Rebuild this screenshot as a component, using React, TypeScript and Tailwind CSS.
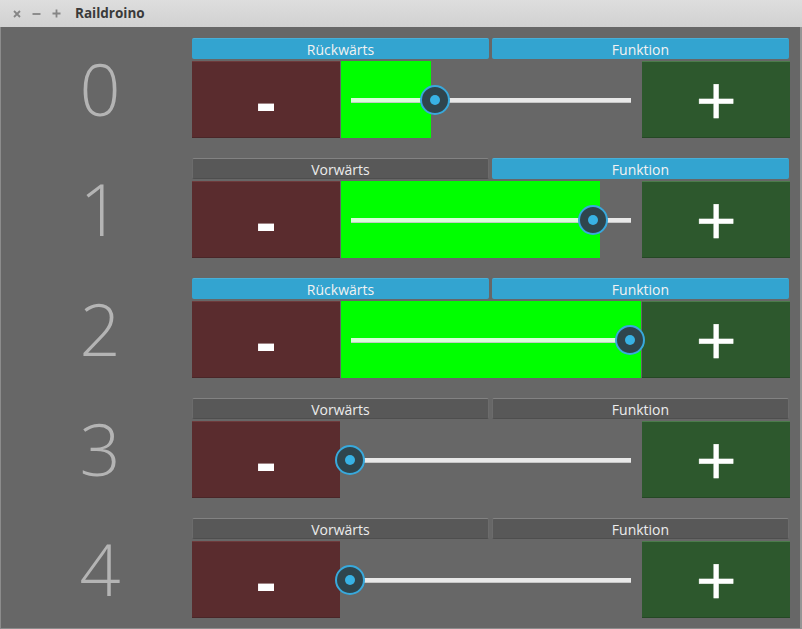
import React from "react";

type Row = { n: number; dir: "Rückwärts" | "Vorwärts"; fn: boolean; green: number; handle: number };

const rows: Row[] = [
  { n: 0, dir: "Rückwärts", fn: true, green: 90, handle: 94 },
  { n: 1, dir: "Vorwärts", fn: true, green: 259, handle: 252 },
  { n: 2, dir: "Rückwärts", fn: true, green: 300, handle: 289 },
  { n: 3, dir: "Vorwärts", fn: false, green: 0, handle: 9 },
  { n: 4, dir: "Vorwärts", fn: false, green: 0, handle: 9 },
];

function TopButton({ label, active }: { label: string; active: boolean }) {
  return (
    <div
      className={
        active
          ? "w-[297px] h-[21px] pt-[2px] rounded-[2px] bg-[#33a4d0] border-t border-[#46b0da] flex items-center justify-center text-[14px] text-[#f2f2f2] leading-none"
          : "w-[297px] h-[21px] pt-[2px] rounded-[2px] bg-[#585858] border border-[#6c6c6c] border-t-[#828282] border-b-[#4e4e4e] flex items-center justify-center text-[14px] text-[#ececec] leading-none"
      }
      style={{ fontFamily: "'Open Sans', 'Noto Sans', sans-serif" }}
    >
      {label}
    </div>
  );
}

function Slider({ green, handle }: { green: number; handle: number }) {
  return (
    <div className="relative w-[300px] h-[77px]">
      {green > 0 && <div className="absolute left-0 top-0 h-[77px] bg-[#00ff00]" style={{ width: green }} />}
      <div className="absolute left-[10px] right-[10px] top-[37px] h-[5px] bg-white/85 border-b border-[#b8b8b8]/70" />
      <div
        className="absolute top-[24px] w-[30px] h-[30px] rounded-full border-2 border-[#38a9dc] bg-[#2f454d] flex items-center justify-center"
        style={{ left: handle - 15 }}
      >
        <div className="w-[10px] h-[10px] rounded-full bg-[#38b2e4]" />
      </div>
    </div>
  );
}

function TrainRow({ r }: { r: Row }) {
  return (
    <div className="flex h-[99px]">
      <div
        className="w-[191px] pl-[7px] flex items-center justify-center text-[72px] font-light text-[#b4b4b4] leading-none"
        style={{ fontFamily: "'Open Sans', 'Noto Sans', sans-serif" }}
      >
        {r.n}
      </div>
      <div className="w-[598px] flex flex-col gap-[2px]">
        <div className="flex gap-[3px]">
          <TopButton label={r.dir} active={r.dir === "Rückwärts"} />
          <TopButton label="Funktion" active={r.fn} />
        </div>
        <div className="flex gap-[1px] items-start">
          <div
            className="w-[148px] h-[76px] bg-[#5a2c2e] border-t border-[#6e3b3c] shadow-[0_1px_0_#4a2628] flex items-center justify-center text-white text-[52px] font-bold leading-none pt-[8px]"
            style={{ fontFamily: "'DejaVu Sans', sans-serif" }}
          >
            -
          </div>
          <Slider green={r.green} handle={r.handle} />
          <div
            className="w-[148px] h-[76px] bg-[#2d582d] border-t border-[#4b7b4b] shadow-[0_1px_0_#254825] flex items-center justify-center text-white text-[54px] leading-none"
            style={{ fontFamily: "'DejaVu Sans', sans-serif", WebkitTextStroke: "0.6px white" }}
          >
            +
          </div>
        </div>
      </div>
    </div>
  );
}

export default function App() {
  return (
    <div className="w-[802px] h-[629px] flex flex-col bg-[#676767] overflow-hidden">
      <div className="h-[27px] flex items-center bg-gradient-to-b from-[#dedede] to-[#d1d1d1] shrink-0">
        <div className="flex items-center ml-[13px] gap-[11px]">
          <svg width="8" height="8" viewBox="0 0 8 8">
            <path d="M1 1 L7 7 M7 1 L1 7" stroke="#858585" strokeWidth="1.8" />
          </svg>
          <svg width="9" height="8" viewBox="0 0 9 8">
            <path d="M0.5 4 L8.5 4" stroke="#858585" strokeWidth="1.8" />
          </svg>
          <svg width="9" height="9" viewBox="0 0 9 9">
            <path d="M0.5 4.5 L8.5 4.5 M4.5 0.5 L4.5 8.5" stroke="#858585" strokeWidth="1.8" />
          </svg>
        </div>
        <div
          className="ml-[14px] text-[13.5px] font-bold text-[#3a3a3a] leading-none"
          style={{ fontFamily: "'Open Sans', 'Noto Sans', sans-serif" }}
        >
          Raildroino
        </div>
      </div>
      <div className="flex-1 flex flex-col gap-[21px] pt-[11px] border-l border-[#8c8c8c] border-r-2 border-r-[#959595] border-b border-b-[#8c8c8c]">
        {rows.map((r) => (
          <TrainRow key={r.n} r={r} />
        ))}
      </div>
    </div>
  );
}
